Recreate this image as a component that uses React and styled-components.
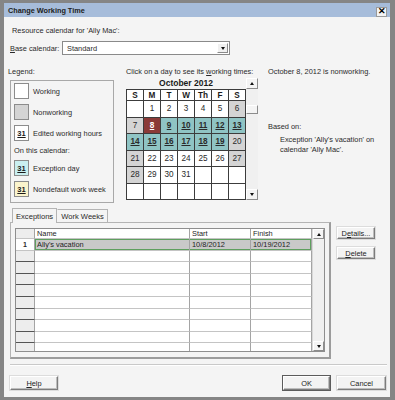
import React from 'react';
import styled, { createGlobalStyle } from 'styled-components';

const GlobalStyle = createGlobalStyle`
  html, body {
    margin: 0;
    padding: 0;
    background: #858585;
  }
`;

const Window = styled.div`
  width: 395px;
  height: 400px;
  box-sizing: border-box;
  padding: 3px 5px 3px 4px;
  background: #858585;
  display: flex;
  flex-direction: column;
  font-family: 'Liberation Sans', Arial, sans-serif;
  font-size: 7.4px;
  color: #2a2a2a;
`;

const TitleBar = styled.div`
  height: 14px;
  flex: none;
  background: #a6bcda;
  display: flex;
  align-items: center;
  justify-content: space-between;
  padding: 0 3px 0 4px;
`;

const TitleText = styled.span`
  font-size: 7.3px;
  font-weight: bold;
  color: #1c1c1c;
`;

const CloseButton = styled.div`
  width: 11px;
  height: 10px;
  box-sizing: border-box;
  margin-top: 3px;
  background: #f4f4f4;
  border: 1px solid #9a9a9a;
  display: flex;
  align-items: center;
  justify-content: center;
  font-size: 9px;
  font-weight: bold;
  color: #000;
  line-height: 1;
`;

const Body = styled.div`
  flex: 1;
  background: #f4f4f4;
  padding: 9px 4px 7px 4px;
  display: flex;
  flex-direction: column;
`;

const Line = styled.div`
  height: ${p => p.h || 10}px;
  line-height: ${p => p.h || 10}px;
  margin-left: ${p => p.indent || 0}px;
  margin-top: ${p => p.top || 0}px;
  white-space: nowrap;
`;

const U = styled.span`
  text-decoration: underline;
`;

const BaseRow = styled.div`
  display: flex;
  align-items: center;
  height: 14px;
  margin-top: 5px;
  margin-left: 2px;
`;

const BaseLabel = styled.span`
  width: 52px;
`;

const Select = styled.div`
  width: 168px;
  height: 14px;
  box-sizing: border-box;
  background: #fff;
  border: 1px solid #8a8a8a;
  display: flex;
  align-items: center;
  justify-content: space-between;
  padding: 0 1px 0 4px;
`;

const DropButton = styled.div`
  width: 11px;
  height: 10px;
  box-sizing: border-box;
  background: #f0f0f0;
  border: 1px solid;
  border-color: #fff #8a8a8a #8a8a8a #fff;
  display: flex;
  align-items: center;
  justify-content: center;
`;

const Arrow = styled.div`
  width: 0;
  height: 0;
  border-left: 2.5px solid transparent;
  border-right: 2.5px solid transparent;
  ${p => (p.up ? 'border-bottom: 3px solid #111;' : 'border-top: 3px solid #111;')}
`;

const MainRow = styled.div`
  display: flex;
  margin-top: 12px;
  height: 136px;
`;

const LegendCol = styled.div`
  width: 106px;
  display: flex;
  flex-direction: column;
`;

const LegendBox = styled.div`
  margin: 3px 0 0 2px;
  width: 104px;
  box-sizing: border-box;
  border: 1px solid #a8a8a8;
  padding: 2px 3px 5px;
  display: flex;
  flex-direction: column;
  gap: 5px;
`;

const LegendItem = styled.div`
  display: flex;
  align-items: center;
  gap: 4px;
  height: 16px;
  white-space: nowrap;
`;

const Swatch = styled.div`
  width: 15px;
  height: 16px;
  box-sizing: border-box;
  flex: none;
  border: 1px solid #8c8c8c;
  background: ${p => p.bg};
  display: flex;
  align-items: center;
  justify-content: center;
  font-size: 7.5px;
  font-weight: bold;
  text-decoration: underline;
  color: #1a1a1a;
`;

const LegendNote = styled.div`
  height: 9px;
  line-height: 9px;
`;

const CalCol = styled.div`
  margin-left: 12px;
  width: 132px;
  display: flex;
  flex-direction: column;
`;

const CalBody = styled.div`
  display: flex;
  margin-top: 1px;
`;

const MonthArea = styled.div`
  width: 120px;
  display: flex;
  flex-direction: column;
`;

const MonthTitle = styled.div`
  height: 11px;
  line-height: 11px;
  text-align: center;
  font-size: 8.5px;
  font-weight: bold;
  color: #1a1a1a;
`;

const DayGrid = styled.div`
  display: grid;
  grid-template-columns: repeat(7, 17px);
  grid-template-rows: 11px repeat(6, 16.5px);
  border-top: 1px solid #3c3c3c;
  border-left: 1px solid #3c3c3c;
`;

const dayBg = {
  blank: '#ffffff',
  work: '#ffffff',
  off: '#d4d4d4',
  exc: '#8fc4c4',
  sel: '#8b3a37',
};

const DayCell = styled.div`
  box-sizing: border-box;
  border-right: 1px solid #3c3c3c;
  border-bottom: 1px solid #3c3c3c;
  background: ${p => dayBg[p.kind]};
  color: ${p => (p.kind === 'sel' ? '#ffffff' : '#2a2a2a')};
  font-size: 8.2px;
  font-weight: ${p => (p.kind === 'exc' || p.kind === 'sel' ? 'bold' : 'normal')};
  text-decoration: ${p => (p.kind === 'exc' || p.kind === 'sel' ? 'underline' : 'none')};
  display: flex;
  align-items: center;
  justify-content: center;
`;

const DayHead = styled(DayCell)`
  background: #fff;
  font-weight: bold;
  color: #1a1a1a;
`;

const ScrollV = styled.div`
  width: 12px;
  height: ${p => p.h}px;
  box-sizing: border-box;
  flex: none;
  background: #f0f0f0;
  display: flex;
  flex-direction: column;
  justify-content: space-between;
  border-left: ${p => (p.edge ? '1px solid #d8d8d8' : 'none')};
`;

const ScrollBtn = styled.div`
  height: ${p => p.h || 10}px;
  box-sizing: border-box;
  background: #f4f4f4;
  border: 1px solid;
  border-color: #ffffff #8c8c8c #8c8c8c #ffffff;
  display: flex;
  align-items: center;
  justify-content: center;
`;

const Track = styled.div`
  flex: 1;
  padding-top: ${p => p.thumbTop || 0}px;
`;

const InfoCol = styled.div`
  margin-left: 10px;
  flex: 1;
  display: flex;
  flex-direction: column;
`;

const TabRow = styled.div`
  display: flex;
  align-items: flex-end;
  height: 15px;
  margin: 4px 0 0 4px;
`;

const Tab = styled.div`
  position: relative;
  z-index: ${p => (p.active ? 1 : 0)};
  height: ${p => (p.active ? 15 : 13)}px;
  margin-bottom: ${p => (p.active ? -1 : 0)}px;
  box-sizing: border-box;
  padding: 0 3px;
  display: flex;
  align-items: center;
  background: #f4f4f4;
  border: 1px solid #b4b4b4;
  border-bottom: none;
  border-left-color: ${p => (p.active ? '#b4b4b4' : 'transparent')};
  font-size: 7.6px;
`;

const PanelRow = styled.div`
  display: flex;
  margin-left: 2px;
`;

const Panel = styled.div`
  width: 321px;
  height: 137px;
  box-sizing: border-box;
  border: 1px solid #b4b4b4;
  border-right: 2px solid #9c9c9c;
  border-bottom: 2px solid #9c9c9c;
  padding: 5px 4px 0 4px;
`;

const TableBox = styled.div`
  width: 310px;
  height: 124px;
  box-sizing: border-box;
  border: 1px solid #8e8e8e;
  display: flex;
  background: #fff;
`;

const GridArea = styled.div`
  flex: 1;
  overflow: hidden;
`;

const TRow = styled.div`
  display: flex;
  height: ${p => (p.head ? 10 : 11.6)}px;
  line-height: ${p => (p.head ? 10 : 11.6)}px;
`;

const RowNum = styled.div`
  width: 19px;
  flex: none;
  box-sizing: border-box;
  background: ${p => (p.first ? '#ffffff' : '#ededed')};
  border-right: 1px solid #a4a4a4;
  border-bottom: 1px solid ${p => (p.dark ? '#555555' : '#c4c4c4')};
  text-align: center;
  font-weight: bold;
  font-size: 7px;
`;

const Cells = styled.div`
  display: grid;
  grid-template-columns: 155px 61px 61px;
`;

const selShadow = edge => {
  const parts = ['inset 0 1px 0 #5f9f5f', 'inset 0 -1px 0 #5f9f5f'];
  if (edge === 'l') parts.push('inset 1px 0 0 #5f9f5f');
  if (edge === 'r') parts.push('inset -1px 0 0 #5f9f5f');
  return parts.join(', ');
};

const Cell = styled.div`
  box-sizing: border-box;
  padding: 0 2px;
  white-space: nowrap;
  overflow: hidden;
  background: ${p => (p.selected ? '#c9c9c9' : '#ffffff')};
  border-right: 1px solid #a4a4a4;
  border-bottom: 1px solid #c4c4c4;
  box-shadow: ${p => (p.selected ? selShadow(p.edge) : 'none')};
  color: #1e1e1e;
`;

const SideCol = styled.div`
  margin-left: 6px;
  padding-top: 5px;
  display: flex;
  flex-direction: column;
  gap: 8px;
`;

const Button = styled.div`
  width: ${p => p.w}px;
  height: ${p => p.h || 14}px;
  box-sizing: border-box;
  display: flex;
  align-items: center;
  justify-content: center;
  background: #f3f3f3;
  border: 1px solid;
  border-color: #ffffff #7c7c7c #7c7c7c #ffffff;
  box-shadow: inset -1px -1px 0 #bdbdbd, 0 0 0 1px ${p => (p.primary ? '#5c5c5c' : '#dcdcdc')};
  color: #222;
  font-size: 7.4px;
`;

const Separator = styled.div`
  margin: 5px -1px 0 2px;
  border-top: 1px solid #c9c9c9;
  border-bottom: 1px solid #ffffff;
`;

const FooterRow = styled.div`
  display: flex;
  align-items: center;
  margin-top: 10px;
  padding-left: 2px;
  gap: 7px;
`;

const Spacer = styled.div`
  flex: 1;
`;

const weeks = [
  [null, 1, 2, 3, 4, 5, 6],
  [7, 8, 9, 10, 11, 12, 13],
  [14, 15, 16, 17, 18, 19, 20],
  [21, 22, 23, 24, 25, 26, 27],
  [28, 29, 30, 31, null, null, null],
  [null, null, null, null, null, null, null],
];

const dayKind = (d, col) => {
  if (d === null) return 'blank';
  if (d === 8) return 'sel';
  if (d >= 9 && d <= 19) return 'exc';
  if (col === 0 || col === 6) return 'off';
  return 'work';
};

const exceptions = [
  { id: 1, name: "Ally's vacation", start: '10/8/2012', finish: '10/19/2012' },
];

const App = () => {
  const rows = Array.from({ length: 10 }, (_, i) => exceptions[i] || null);

  return (
    <>
      <GlobalStyle />
      <Window>
        <TitleBar>
          <TitleText>Change Working Time</TitleText>
          <CloseButton>✕</CloseButton>
        </TitleBar>
        <Body>
          <Line indent={4}>Resource calendar for 'Ally Mac':</Line>
          <BaseRow>
            <BaseLabel><U>B</U>ase calendar:</BaseLabel>
            <Select>
              <span>Standard</span>
              <DropButton><Arrow /></DropButton>
            </Select>
          </BaseRow>

          <MainRow>
            <LegendCol>
              <Line>Legend:</Line>
              <LegendBox>
                <LegendItem><Swatch bg="#ffffff" />Working</LegendItem>
                <LegendItem><Swatch bg="#d4d4d4" />Nonworking</LegendItem>
                <LegendItem><Swatch bg="#ffffff">31</Swatch>Edited working hours</LegendItem>
                <LegendNote>On this calendar:</LegendNote>
                <LegendItem><Swatch bg="#c9eff0">31</Swatch>Exception day</LegendItem>
                <LegendItem><Swatch bg="#fbf4cc">31</Swatch>Nondefault work week</LegendItem>
              </LegendBox>
            </LegendCol>

            <CalCol>
              <Line>Click on a day to see its <U>w</U>orking times:</Line>
              <CalBody>
                <MonthArea>
                  <MonthTitle>October 2012</MonthTitle>
                  <DayGrid>
                    {['S', 'M', 'T', 'W', 'Th', 'F', 'S'].map((h, i) => (
                      <DayHead key={'h' + i} kind="work">{h}</DayHead>
                    ))}
                    {weeks.map((week, r) =>
                      week.map((d, c) => (
                        <DayCell key={r + '-' + c} kind={dayKind(d, c)}>{d}</DayCell>
                      ))
                    )}
                  </DayGrid>
                </MonthArea>
                <ScrollV h={122}>
                  <ScrollBtn h={11}><Arrow up /></ScrollBtn>
                  <Track thumbTop={16}><ScrollBtn h={9} /></Track>
                  <ScrollBtn h={11}><Arrow /></ScrollBtn>
                </ScrollV>
              </CalBody>
            </CalCol>

            <InfoCol>
              <Line>October 8, 2012 is nonworking.</Line>
              <Line top={45}>Based on:</Line>
              <Line top={3} indent={12}>Exception 'Ally's vacation' on</Line>
              <Line indent={12}>calendar 'Ally Mac'.</Line>
            </InfoCol>
          </MainRow>

          <TabRow>
            <Tab active>Exceptions</Tab>
            <Tab>Work Weeks</Tab>
          </TabRow>

          <PanelRow>
            <Panel>
              <TableBox>
                <GridArea>
                  <TRow head>
                    <RowNum />
                    <Cells>
                      <Cell>Name</Cell>
                      <Cell>Start</Cell>
                      <Cell>Finish</Cell>
                    </Cells>
                  </TRow>
                  {rows.map((row, i) => {
                    const sel = i === 0;
                    return (
                      <TRow key={i}>
                        <RowNum first={sel} dark={!sel}>{row ? row.id : ''}</RowNum>
                        <Cells>
                          <Cell selected={sel} edge="l">{row ? row.name : ''}</Cell>
                          <Cell selected={sel}>{row ? row.start : ''}</Cell>
                          <Cell selected={sel} edge="r">{row ? row.finish : ''}</Cell>
                        </Cells>
                      </TRow>
                    );
                  })}
                </GridArea>
                <ScrollV h={122} edge>
                  <ScrollBtn><Arrow up /></ScrollBtn>
                  <ScrollBtn><Arrow /></ScrollBtn>
                </ScrollV>
              </TableBox>
            </Panel>
            <SideCol>
              <Button w={38} h={12}>D<U>e</U>tails...</Button>
              <Button w={38} h={12}><U>D</U>elete</Button>
            </SideCol>
          </PanelRow>

          <Separator />

          <FooterRow>
            <Button w={48}><U>H</U>elp</Button>
            <Spacer />
            <Button w={47} primary>OK</Button>
            <Button w={49}>Cancel</Button>
          </FooterRow>
        </Body>
      </Window>
    </>
  );
};

export default App;
